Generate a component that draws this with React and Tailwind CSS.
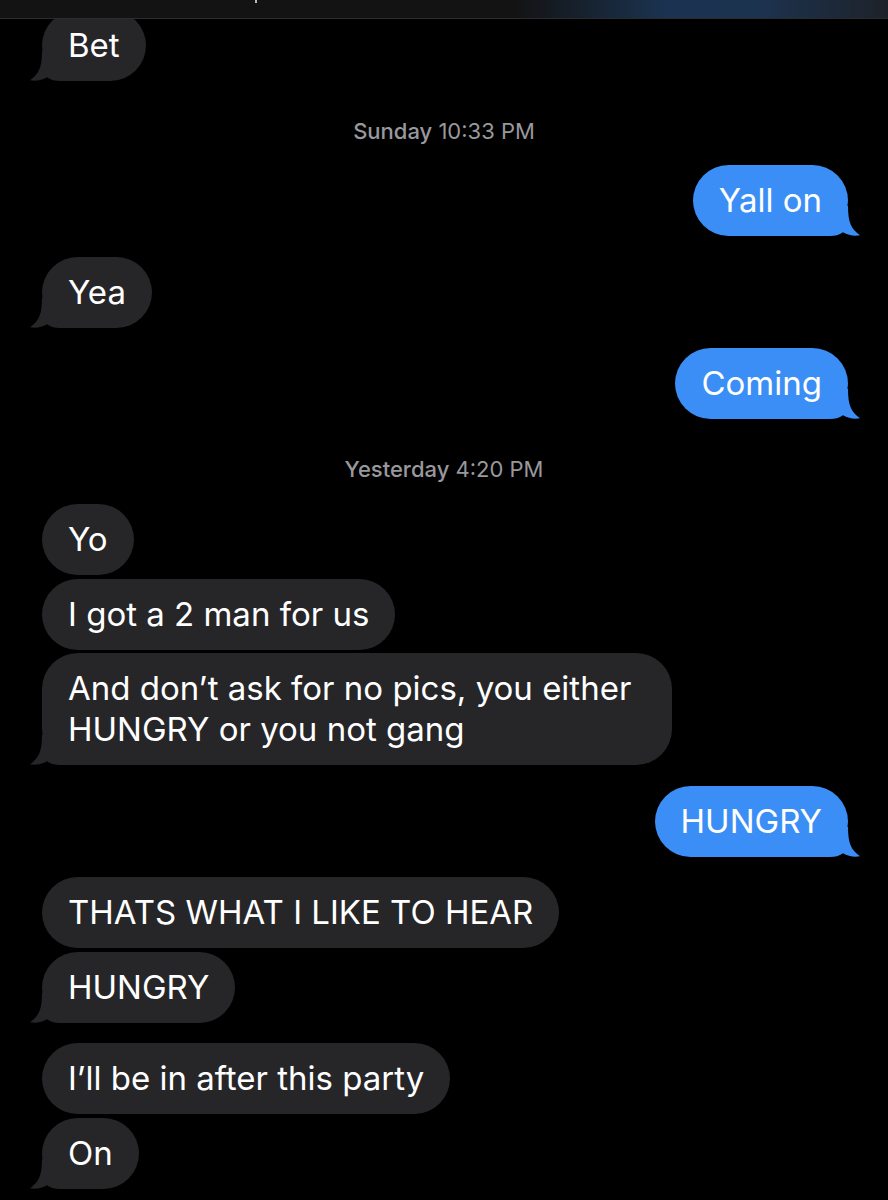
import React from "react";

const font = { fontFamily: "Inter, 'Noto Sans', sans-serif" };

const Tail = ({ sent }) => (
  <svg
    width="48"
    height="30"
    viewBox="0 0 48 30"
    className={
      sent
        ? "absolute bottom-0 right-[-12px] -scale-x-100"
        : "absolute bottom-0 left-[-12px]"
    }
  >
    <path
      d="M12 0 C12 16 9 23 0 29.2 C6 30.4 12 29 17 26.2 C21 29 25 30 30 30 L48 30 L48 0 Z"
      fill={sent ? "#3b8ef6" : "#262629"}
    />
  </svg>
);

const Bubble = ({ text, sent, tail, className = "" }) => (
  <div className={`flex ${sent ? "justify-end pr-[40px]" : "justify-start pl-[42px]"} ${className}`}>
    <div
      className={`relative max-w-[630px] rounded-[36px] px-[26px] py-[15px] text-[33px] leading-[41px] text-white ${
        sent ? "bg-[#3b8ef6]" : "bg-[#262629]"
      }`}
    >
      {tail && <Tail sent={sent} />}
      <span className="relative">{text}</span>
    </div>
  </div>
);

const Stamp = ({ day, time, className = "" }) => (
  <div className={`h-7 text-center text-[22px] leading-7 text-[#98989d] ${className}`}>
    <span className="font-medium">{day}</span> {time}
  </div>
);

export default function App() {
  return (
    <div className="relative min-h-[1200px] overflow-hidden bg-black" style={font}>
      {/* status bar over the list */}
      <div className="absolute inset-x-0 top-0 z-10 h-[19px] border-b border-[#2c2c2e] bg-[linear-gradient(90deg,#131313_0%,#131313_58%,#1b3350_75%,#1c3350_85%,#1d2229_100%)]">
        <div className="ml-[255px] h-[3px] w-[2px] bg-[#bbb]" />
      </div>

      <div className="pt-[10px]">
        <Bubble text="Bet" tail />
        <Stamp day="Sunday" time="10:33 PM" className="mt-[36px] mb-[20px]" />
        <Bubble text="Yall on" sent tail />
        <Bubble text="Yea" tail className="mt-[21px]" />
        <Bubble text="Coming" sent tail className="mt-[20px]" />
        <Stamp day="Yesterday" time="4:20 PM" className="mt-[36px] mb-[21px]" />
        <Bubble text="Yo" />
        <Bubble text="I got a 2 man for us" className="mt-[4px]" />
        <Bubble
          text="And don’t ask for no pics, you either HUNGRY or you not gang"
          tail
          className="mt-[3px]"
        />
        <Bubble text="HUNGRY" sent tail className="mt-[21px]" />
        <Bubble text="THATS WHAT I LIKE TO HEAR" className="mt-[20px]" />
        <Bubble text="HUNGRY" tail className="mt-[4px]" />
        <Bubble text="I’ll be in after this party" className="mt-[20px]" />
        <Bubble text="On" tail className="mt-[4px]" />
      </div>
    </div>
  );
}
